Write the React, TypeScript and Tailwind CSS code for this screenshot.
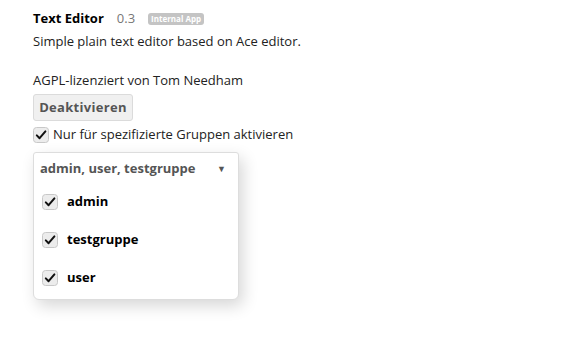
import React from 'react';

const Check: React.FC<{ size?: number }> = ({ size = 16 }) => (
  <svg width={size} height={size} viewBox="0 0 16 16" className="shrink-0">
    <rect x="0.5" y="0.5" width="15" height="15" rx="3" fill="#ececec" stroke="#c8c8c8" />
    <path d="M3.8 8.4 L6.6 11.2 L12.4 4.4" fill="none" stroke="#111" strokeWidth="2" strokeLinecap="round" strokeLinejoin="round" />
  </svg>
);

const groups = ['admin', 'testgruppe', 'user'];

const App: React.FC = () => {
  return (
    <div className="w-[572px] h-[340px] bg-white text-[13px] text-[#222] font-['Open_Sans',sans-serif] overflow-hidden">
      <div className="pl-[33px] pt-[10px]">
        <div className="flex items-center h-[18px]">
          <span className="font-bold text-black">Text Editor</span>
          <span className="ml-[13px] text-[#777]">0.3</span>
          <span className="ml-[13px] px-[3px] rounded-[3px] bg-[#c4c4c4] text-white text-[8px] font-bold leading-[12px]">Internal App</span>
        </div>
        <p className="mt-[4px] leading-[18px]">Simple plain text editor based on Ace editor.</p>
        <p className="mt-[21px] leading-[18px]">AGPL-lizenziert von Tom Needham</p>
        <button className="mt-[5px] h-[27px] w-[100px] rounded-[3px] border border-[#dbdbdb] bg-[#f0f0f0] font-bold text-[#555] tracking-[0.3px]">
          Deaktivieren
        </button>
        <label className="mt-[5px] flex items-center gap-[4px] h-[18px]">
          <Check />
          <span>Nur für spezifizierte Gruppen aktivieren</span>
        </label>
        <div className="mt-[8px] w-[206px] rounded-t-[3px] rounded-b-[6px] border border-[#ddd] bg-white shadow-[4px_6px_16px_rgba(0,0,0,0.16)]">
          <div className="flex items-center justify-between h-[30px] pt-[1px] pl-[6px] pr-[12px]">
            <span className="font-bold text-[#555]">admin, user, testgruppe</span>
            <span className="text-[#555] text-[9px]">▼</span>
          </div>
          <div className="pb-[2px]">
            {groups.map(g => (
              <div key={g} className="flex items-center gap-[9px] pl-[8px] h-[38px]">
                <Check />
                <span className="font-bold text-black">{g}</span>
              </div>
            ))}
          </div>
        </div>
      </div>
    </div>
  );
};

export default App;
